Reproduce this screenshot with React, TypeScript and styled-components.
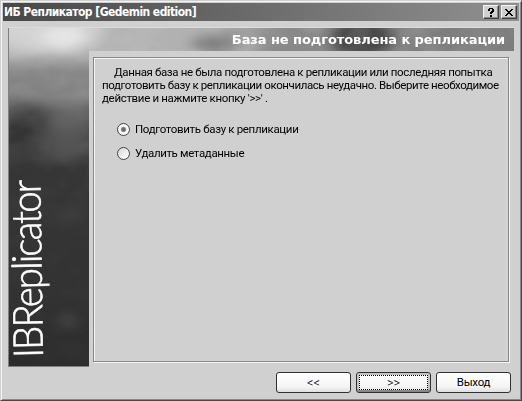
import React from 'react';
import styled, { createGlobalStyle } from 'styled-components';

const Global = createGlobalStyle`
  *{box-sizing:border-box}
  html,body{margin:0;padding:0;overflow:hidden}
`;
const Window = styled.div`
  width:522px;height:401px;padding:1px;background:#d0d0d0;
  border:1px solid;border-color:#d0d0d0 #484848 #484848 #d0d0d0;
  box-shadow:inset 1px 1px #f4f4f4,inset -1px -1px #888;
  font:11.5px/13px Roboto,"Liberation Sans",sans-serif;color:#000;
`;
const TitleBar = styled.header`
  height:18px;width:516px;margin:1px 0 0 1px;
  background:linear-gradient(90deg,#484848,#909090);
  display:flex;align-items:center;padding:0 2px 0 1px;color:#fff;
`;
const Fit = styled.span<{$ls?: number}>`
  display:block;white-space:pre;letter-spacing:${p => p.$ls || 0}px;
`;
const FirstLine = styled(Fit)`padding-left:12px;`;
const Title = styled.h1`
  margin:0;flex:1;font:bold 12px/18px "DejaVu Sans Condensed","DejaVu Sans",sans-serif;
`;
const Caption = styled.button`
  width:16px;height:14px;margin-left:2px;padding:0;display:grid;place-items:center;background:#d0d0d0;
  border:1px solid;border-color:#f4f4f4 #404040 #404040 #f4f4f4;box-shadow:inset -1px -1px #888;
`;
const Body = styled.main`
  position:relative;width:506px;height:340px;margin:6px 0 0 6px;
  display:grid;grid-template:24px 316px / 81px 425px;
`;
const Clouds = styled.svg`position:absolute;left:0;top:0;`;
const Heading = styled.h2`
  position:relative;grid-column:1 / 3;margin:0;padding:0 9px 0 0;display:flex;justify-content:flex-end;
  font:bold 13px/25px "DejaVu Sans",sans-serif;color:#fff;
`;
const Side = styled.aside`position:relative;`;
const Brand = styled.div`
  position:absolute;left:20px;top:307px;height:0;width:0;white-space:nowrap;
  transform-origin:0 0;transform:rotate(-90.9deg) scaleX(.935);
  font:300 41px/0 Lato,sans-serif;letter-spacing:-2px;color:#fff;-webkit-text-stroke:.6px #fff;
`;
const Panel = styled.section`
  position:relative;width:416px;height:305px;margin:6px 0 0 4px;padding:8px 0 0 8px;
  border:1px solid #888;box-shadow:1px 1px #f4f4f4,inset 1px 1px #f4f4f4;
`;
const Paragraph = styled.div`height:51px;`;
const Option = styled.label`display:flex;align-items:center;gap:5px;height:24px;margin-left:15px;`;
const Radio = styled.span<{$on?: boolean}>`
  width:13px;height:13px;border:1px solid #444;border-radius:50%;
  background:${p => p.$on
    ? 'radial-gradient(circle,#666 0 1px,#999 2.4px,#f8f8f8 3.2px)'
    : 'linear-gradient(135deg,#d8d8d8,#fff)'};
`;
const Actions = styled.footer`display:flex;gap:5px;margin:5px 0 0 274px;`;
const Button = styled.button<{$focus?: boolean}>`
  position:relative;width:75px;height:21px;padding:0;border:1px solid #303030;border-radius:3px;
  background:linear-gradient(#fff,#f6f6f6 70%,#e0e0e0);font:inherit;letter-spacing:-.3px;color:#000;
  display:grid;place-items:center;
  ${p => p.$focus && `
    box-shadow:inset 0 -2px #888,inset 0 0 0 2px #c4c4c4;
    &::after{content:'';position:absolute;inset:2px;border:1px dotted #000;}
  `}
`;
const Arrows = styled(Fit)`font-size:12.5px;font-weight:300;`;

const blobs: [number, number, number, number, string, number][] = [
  [150, 8, 130, 24, '#b0b0b0', .8],
  [40, 2, 55, 24, '#cfcfcf', 1],
  [55, 8, 20, 12, '#e4e4e4', .9],
  [10, 24, 16, 6, '#c4c4c4', .7],
  [208, 17, 24, 9, '#787878', .9],
  [238, 4, 26, 7, '#9a9a9a', .8],
  [285, 12, 36, 18, '#888', .8],
  [354, 12, 30, 20, '#484848', 1],
  [412, 13, 20, 8, '#828282', .8],
  [475, 12, 40, 20, '#808080', .9],
];

function Glyph({ kind }: {kind: 'help' | 'close'}) {
  return <svg width="8" height="9" viewBox="0 0 8 9" shapeRendering="crispEdges">
    {kind === 'help'
      ? <path d="M2 0H6V1H7V4H6V5H5V6H3V4H4V3H5V1H3V3H1V1H2ZM3 7H5V9H3Z" fill="#000"/>
      : <path d="M0 1H2V2H3V3H5V2H6V1H8V2H7V3H6V4H5V5H6V6H7V7H8V8H6V7H5V6H3V7H2V8H0V7H1V6H2V5H3V4H2V3H1V2H0Z" fill="#000"/>}
  </svg>;
}

function Sky() {
  return <Clouds width="506" height="340" viewBox="0 0 506 340">
    <defs>
      <clipPath id="frame"><path d="M0 0H506V24H81V340H0Z"/></clipPath>
      <linearGradient id="fall" x1="0" y1="0" x2="0" y2="1">
        <stop offset="0" stopColor="#d0d0d0"/><stop offset=".07" stopColor="#b4b4b4"/>
        <stop offset=".13" stopColor="#8a8a8a"/><stop offset=".2" stopColor="#7c7c7c"/>
        <stop offset=".26" stopColor="#5c5c5c"/><stop offset=".34" stopColor="#464646"/>
        <stop offset=".42" stopColor="#363636"/><stop offset=".8" stopColor="#323232"/>
        <stop offset="1" stopColor="#2c2c2c"/>
      </linearGradient>
      <linearGradient id="across">
        <stop offset="0" stopColor="#ccc"/><stop offset=".3" stopColor="#aaa"/>
        <stop offset=".45" stopColor="#8a8a8a"/><stop offset="1" stopColor="#777"/>
      </linearGradient>
      <linearGradient id="fade" x1="0" y1="0" x2="0" y2="1">
        <stop offset="0" stopColor="#fff"/><stop offset=".2" stopColor="#bbb"/>
        <stop offset=".55" stopColor="#333"/><stop offset="1" stopColor="#222"/>
      </linearGradient>
      <mask id="thin"><rect width="506" height="340" fill="url(#fade)"/></mask>
      <filter id="soft" x="-50%" y="-50%" width="200%" height="200%" colorInterpolationFilters="sRGB">
        <feGaussianBlur stdDeviation="7 5"/>
      </filter>
      <filter id="mist" x="0" y="0" width="100%" height="100%" colorInterpolationFilters="sRGB">
        <feTurbulence type="fractalNoise" baseFrequency=".025 .035" numOctaves="3" seed="8"/>
        <feColorMatrix values="0 0 0 0 1  0 0 0 0 1  0 0 0 0 1  1.6 0 0 0 -.65"/>
      </filter>
    </defs>
    <g clipPath="url(#frame)">
      <rect width="81" height="340" fill="url(#fall)"/>
      <rect x="81" width="425" height="24" fill="url(#across)"/>
      <g filter="url(#soft)">
        {blobs.map(([x, y, rx, ry, fill, opacity]) =>
          <ellipse key={`${x}-${y}`} cx={x} cy={y} rx={rx} ry={ry} fill={fill} opacity={opacity}/>)}
        <ellipse cx="50" cy="60" rx="45" ry="14" fill="#858585" opacity=".6"/>
        <ellipse cx="22" cy="92" rx="22" ry="14" fill="#383838" opacity=".75"/>
        <ellipse cx="10" cy="115" rx="18" ry="24" fill="#303030" opacity=".8"/>
        <ellipse cx="60" cy="90" rx="22" ry="14" fill="#666" opacity=".7"/>
        <ellipse cx="60" cy="117" rx="20" ry="16" fill="#5b5b5b" opacity=".7"/>
        <ellipse cx="65" cy="188" rx="10" ry="7" fill="#484848" opacity=".5"/>
        <ellipse cx="60" cy="294" rx="10" ry="7" fill="#505050" opacity=".6"/>
      </g>
      <g mask="url(#thin)"><rect width="506" height="340" filter="url(#mist)" opacity=".22"/></g>
    </g>
    <path d="M0 .5H506" stroke="#ddd"/>
    <path d="M.5 1V340M0 339.5H81" stroke="#808080"/>
  </Clouds>;
}

export default function App() {
  return <><Global/><Window>
    <TitleBar>
      <Title><Fit $ls={-.55}>ИБ Репликатор [Gedemin edition]</Fit></Title>
      <Caption aria-label="Справка"><Glyph kind="help"/></Caption>
      <Caption aria-label="Закрыть"><Glyph kind="close"/></Caption>
    </TitleBar>
    <Body>
      <Sky/>
      <Heading><Fit $ls={-.08}>База не подготовлена к репликации</Fit></Heading>
      <Side><Brand>IBReplicator</Brand></Side>
      <Panel>
        <Paragraph>
          <FirstLine $ls={-.37}>Данная база не была подготовлена к репликации или последняя попытка</FirstLine>
          <Fit $ls={-.4}>подготовить базу к репликации окончилась неудачно. Выберите необходимое</Fit>
          <Fit $ls={-.33}>действие и нажмите кнопку '&gt;&gt;' .</Fit>
        </Paragraph>
        <Option><Radio $on/><Fit $ls={-.33}>Подготовить базу к репликации</Fit></Option>
        <Option><Radio/><Fit $ls={-.36}>Удалить метаданные</Fit></Option>
      </Panel>
    </Body>
    <Actions>
      <Button><Arrows>&lt;&lt;</Arrows></Button>
      <Button $focus><Arrows>&gt;&gt;</Arrows></Button>
      <Button>Выход</Button>
    </Actions>
  </Window></>;
}
